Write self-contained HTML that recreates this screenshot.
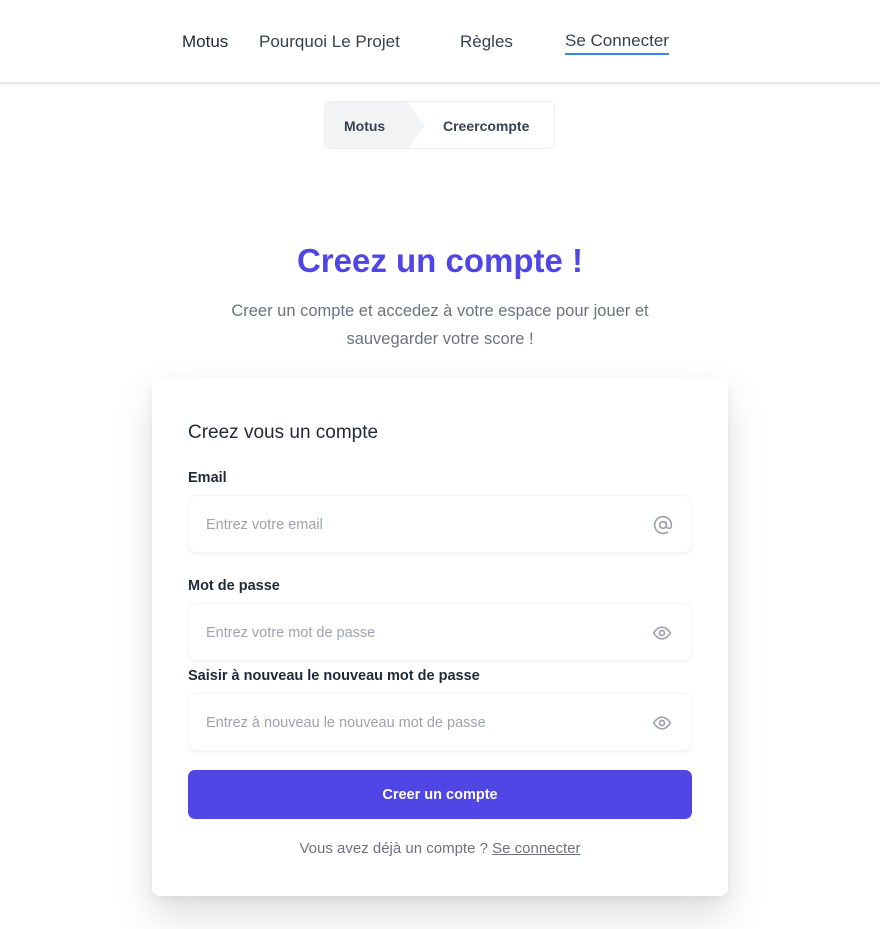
<!DOCTYPE html>
<html><head><meta charset="utf-8"><style>
*{box-sizing:border-box;margin:0;padding:0}
body{width:880px;height:929px;background:#fff;font-family:"Liberation Sans",sans-serif;position:relative;overflow:hidden}
.nav{position:absolute;left:0;top:0;width:880px;height:83px;background:#fff;box-shadow:0 1px 3px rgba(0,0,0,.12);border-bottom:1px solid #e5e7eb}
.nav span{position:absolute;top:32px;font-size:17px;color:#374151}
.crumb{position:absolute;left:324px;top:101px;width:231px;height:48px;border:1px solid #eceef1;border-radius:7px;overflow:hidden;background:#fff}
.crumb .a{position:absolute;left:0;top:0;width:82px;height:48px;background:#f2f3f5}
.crumb .arr{position:absolute;left:82px;top:0;width:0;height:0;border-top:24px solid transparent;border-bottom:24px solid transparent;border-left:18px solid #f2f3f5}
.crumb span{position:absolute;top:16px;font-size:14px;font-weight:bold;color:#374151}
h1{position:absolute;top:242px;width:880px;text-align:center;font-size:33px;color:#4f46e5;font-weight:bold}
.sub{position:absolute;top:297px;left:200px;width:480px;text-align:center;font-size:16.5px;line-height:28px;color:#6b7280}
.card{position:absolute;left:152px;top:378px;width:576px;height:518px;background:#fff;border-radius:8px;box-shadow:0 20px 40px rgba(0,0,0,.13),0 4px 10px rgba(0,0,0,.05)}
.t{position:absolute;left:36px;top:44px;font-size:19px;color:#1f2937}
.l{position:absolute;left:36px;font-size:14.5px;font-weight:bold;color:#1f2937}
.in{position:absolute;left:36px;width:504px;height:58px;border-radius:8px;box-shadow:0 1px 3px rgba(0,0,0,.06);border:1px solid #f5f5f6}
.in span{position:absolute;left:17px;top:21px;font-size:14.5px;color:#9ca3af}
.in svg{position:absolute;right:18px;top:19px}
.btn{position:absolute;left:36px;top:392px;width:504px;height:49px;background:#4f46e5;border-radius:7px;color:#fff;font-weight:bold;font-size:14.5px;text-align:center;line-height:51px}
.f{position:absolute;top:462px;width:576px;text-align:center;font-size:15px;color:#6b7280}
</style></head><body>
<div class="nav">
<span style="left:182px;color:#1f2937">Motus</span>
<span style="left:259px">Pourquoi Le Projet</span>
<span style="left:460px">Règles</span>
<span style="left:565px;top:31px;border-bottom:2px solid #3b82f6;padding-bottom:2px">Se Connecter</span>
</div>
<div class="crumb"><div class="a"></div><div class="arr"></div><span style="left:19px">Motus</span><span style="left:118px">Creercompte</span></div>
<h1>Creez un compte !</h1>
<div class="sub">Creer un compte et accedez à votre espace pour jouer et sauvegarder votre score !</div>
<div class="card">
<div class="t">Creez vous un compte</div>
<div class="l" style="top:92px">Email</div>
<div class="in" style="top:117px"><span>Entrez votre email</span><svg width="20" height="20" viewBox="0 0 24 24" fill="none" stroke="#9ca3af" stroke-width="2"><circle cx="12" cy="12" r="4"/><path d="M16 8v5a3 3 0 0 0 6 0v-1a10 10 0 1 0-4 8"/></svg></div>
<div class="l" style="top:200px">Mot de passe</div>
<div class="in" style="top:225px"><span>Entrez votre mot de passe</span><svg width="22" height="20" viewBox="0 0 24 24" fill="none" stroke="#9ca3af" stroke-width="2"><path d="M2 12s4-7 10-7 10 7 10 7-4 7-10 7S2 12 2 12z"/><circle cx="12" cy="12" r="3"/></svg></div>
<div class="l" style="top:290px">Saisir à nouveau le nouveau mot de passe</div>
<div class="in" style="top:315px"><span>Entrez à nouveau le nouveau mot de passe</span><svg width="22" height="20" viewBox="0 0 24 24" fill="none" stroke="#9ca3af" stroke-width="2"><path d="M2 12s4-7 10-7 10 7 10 7-4 7-10 7S2 12 2 12z"/><circle cx="12" cy="12" r="3"/></svg></div>
<div class="btn">Creer un compte</div>
<div class="f">Vous avez déjà un compte ? <u>Se connecter</u></div>
</div>
</body></html>
